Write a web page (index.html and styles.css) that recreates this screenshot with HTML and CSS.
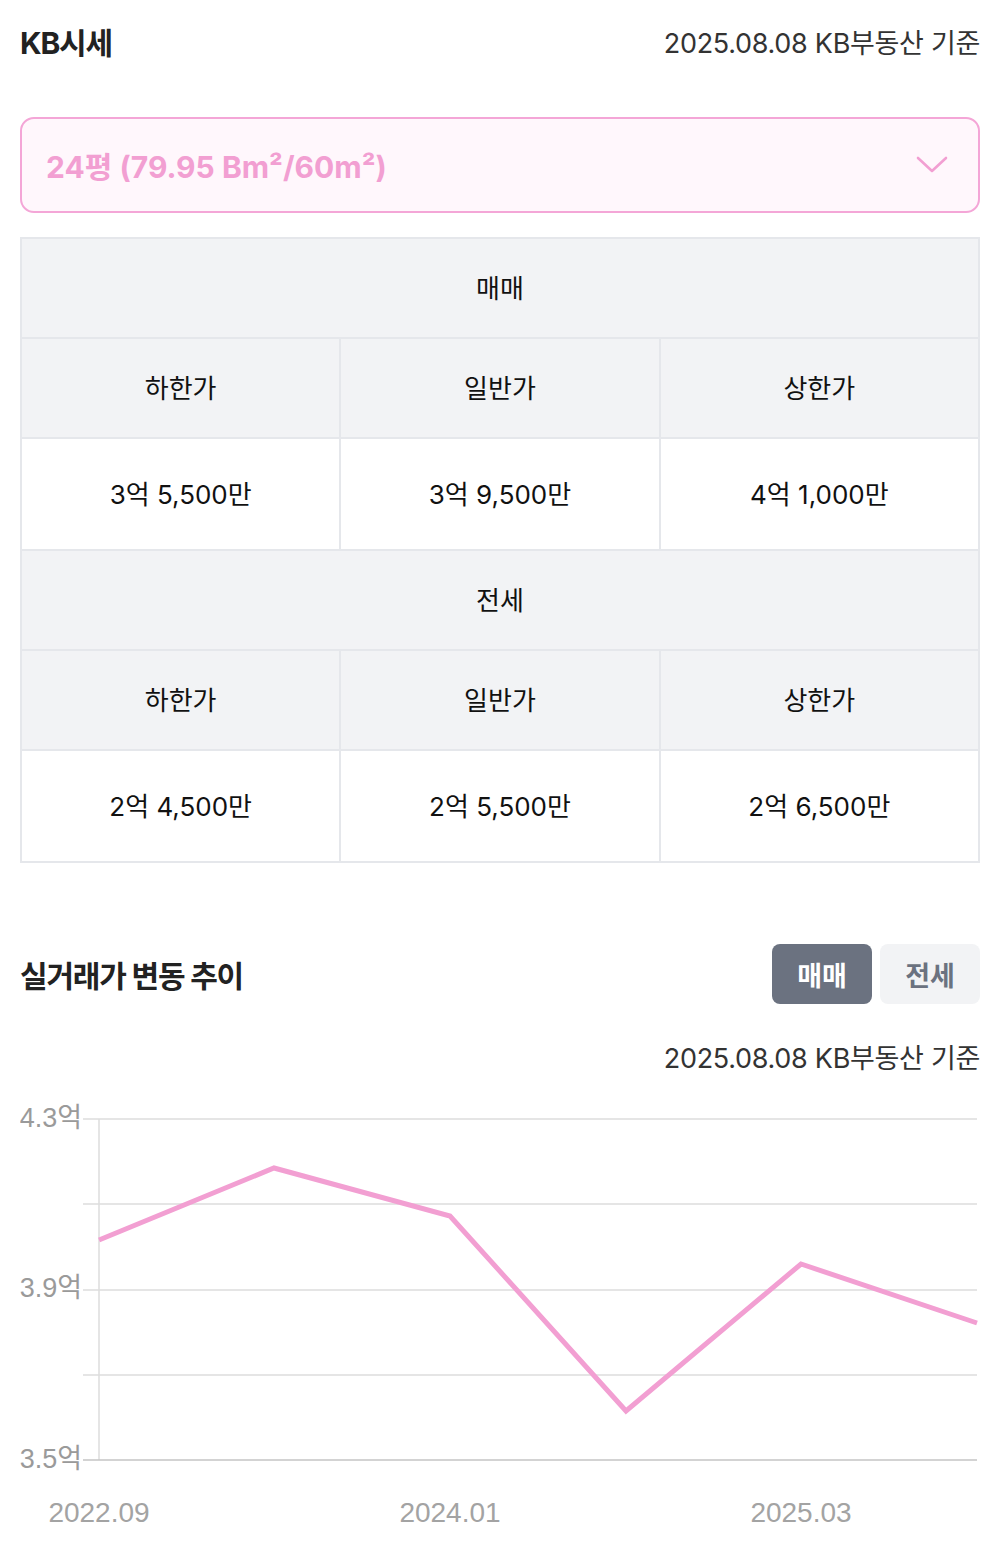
FILE: index.html
```html
<!DOCTYPE html>
<html lang="ko">
<head>
  <meta charset="UTF-8" />
  <title>KB시세</title>
  <link rel="stylesheet" href="styles.css">
</head>
<body>
  <div class="page">
    <div class="head">
      <h2 class="title">KB시세</h2>
      <span class="basis">2025.08.08 KB부동산 기준</span>
    </div>

    <div class="select">
      <span class="select-text">24평 (79.95 Bm²/60m²)</span>
      <svg class="chev" width="32" height="18" viewBox="0 0 32 18">
        <polyline points="2,2 16,15 30,2" fill="none" stroke="#f29fd2" stroke-width="2.6" stroke-linecap="round" stroke-linejoin="round" />
      </svg>
    </div>

    <table class="price">
      <tr class="gray"><td colspan="3">매매</td></tr>
      <tr class="gray"><td>하한가</td><td>일반가</td><td>상한가</td></tr>
      <tr class="val"><td>3억 5,500만</td><td>3억 9,500만</td><td>4억 1,000만</td></tr>
      <tr class="gray"><td colspan="3">전세</td></tr>
      <tr class="gray"><td>하한가</td><td>일반가</td><td>상한가</td></tr>
      <tr class="val"><td>2억 4,500만</td><td>2억 5,500만</td><td>2억 6,500만</td></tr>
    </table>

    <div class="head trend-head">
      <h2 class="title">실거래가 변동 추이</h2>
      <div class="tabs">
        <button class="tab on">매매</button>
        <button class="tab">전세</button>
      </div>
    </div>
    <div class="basis-row"><span class="basis">2025.08.08 KB부동산 기준</span></div>

    <!-- 실거래가 차트 -->
    <svg class="chart" width="960" height="456" viewBox="0 0 960 456">
      <g stroke="#dcdcdc" stroke-width="1.5">
        <line x1="63" y1="29" x2="957" y2="29" />
        <line x1="63" y1="114" x2="957" y2="114" />
        <line x1="63" y1="200" x2="957" y2="200" />
        <line x1="63" y1="285" x2="957" y2="285" />
        <line x1="79" y1="29" x2="79" y2="370" />
      </g>
      <line x1="63" y1="370" x2="957" y2="370" stroke="#c4c4c4" stroke-width="1.5" />
      <g class="ylab" text-anchor="end">
        <text x="62" y="37">4.3억</text>
        <text x="62" y="207">3.9억</text>
        <text x="62" y="378">3.5억</text>
      </g>
      <g class="xlab" text-anchor="middle">
        <text x="79" y="432">2022.09</text>
        <text x="430" y="432">2024.01</text>
        <text x="781" y="432">2025.03</text>
      </g>
      <polyline points="79,150 254,78 430,126 606,321 781,174 957,233" fill="none" stroke="#f29fd2" stroke-width="5" stroke-linejoin="miter" />
    </svg>
  </div>
</body>
</html>
```

FILE: styles.css
```css
* {
  margin: 0;
  padding: 0;
  box-sizing: border-box;
}

body {
  background: #fff;
  font-family: "Inter", "Noto Sans CJK KR", sans-serif;
  color: #222;
}

.page {
  padding: 0 20px;
}

.head {
  display: flex;
  justify-content: space-between;
  align-items: center;
  height: 82px;
}

.title {
  font-size: 30px;
  font-weight: 700;
  letter-spacing: -1.2px;
  color: #222;
}

.basis {
  font-size: 27px;
  color: #333;
  letter-spacing: -0.3px;
}

.select {
  margin-top: 35px;
  height: 96px;
  border: 2px solid #f4a6d7;
  border-radius: 14px;
  background: #fff7fc;
  display: flex;
  align-items: center;
  justify-content: space-between;
  padding: 0 30px 0 24px;
}

.select-text {
  font-size: 30px;
  font-weight: 700;
  color: #f29fd2;
  letter-spacing: 0;
}

.price {
  margin-top: 24px;
  width: 100%;
  border-collapse: collapse;
  table-layout: fixed;
}

.price td {
  border: 2px solid #e5e7eb;
  text-align: center;
  font-size: 26px;
  color: #111;
  padding-bottom: 3px;
}

.price .gray td {
  background: #f2f3f5;
  height: 100px;
}

.price .val td {
  height: 112px;
}

.trend-head {
  margin-top: 80px;
  height: 62px;
}

.tabs {
  display: flex;
  gap: 8px;
}

.tab {
  width: 100px;
  height: 60px;
  border: 0;
  border-radius: 8px;
  background: #f2f3f5;
  color: #6b7280;
  font-family: "Inter", "Noto Sans CJK KR", sans-serif;
  font-size: 27px;
  font-weight: 700;
}

.tab.on {
  background: #6b7280;
  color: #fff;
}

.basis-row {
  display: flex;
  justify-content: flex-end;
  margin-top: 32px;
}

.chart {
  display: block;
  margin-top: 14px;
}

.ylab text {
  font-family: "Liberation Sans", "Noto Sans CJK KR", sans-serif;
  font-size: 27px;
  fill: #9a9a9a;
}

.xlab text {
  font-family: "Liberation Sans", sans-serif;
  font-size: 28px;
  fill: #a3a3a3;
}
```
